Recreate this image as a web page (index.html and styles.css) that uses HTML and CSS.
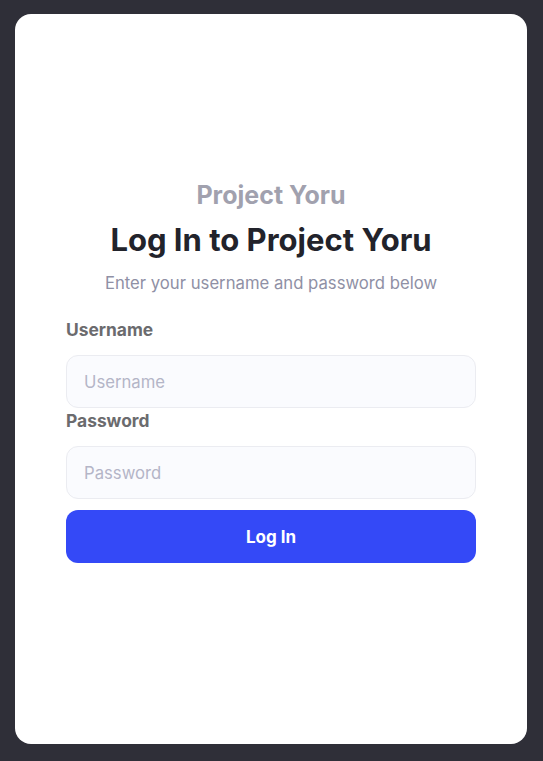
FILE: index.html
```html
<!DOCTYPE html>
<html lang="en">
<head>
<meta charset="utf-8">
<title>Log In - Project Yoru</title>
<link rel="stylesheet" href="styles.css">
</head>
<body>
<main class="card">
  <div class="content">
    <header class="head">
      <p class="brand">Project Yoru</p>
      <h1 class="title">Log In to Project Yoru</h1>
      <p class="subtitle">Enter your username and password below</p>
    </header>
    <form class="form">
      <label class="label" for="username">Username</label>
      <input class="input" id="username" type="text" placeholder="Username">
      <label class="label" for="password">Password</label>
      <input class="input" id="password" type="password" placeholder="Password">
      <button class="button" type="button">Log In</button>
    </form>
  </div>
</main>
</body>
</html>
```

FILE: styles.css
```css
* { box-sizing: border-box; }
html, body { height: 100%; }
body {
  margin: 0;
  background: #2f2f38;
  font-family: Inter, "Noto Sans", sans-serif;
  padding: 14px 16px 17px 15px;
  display: flex;
}
.card {
  flex: 1;
  background: #ffffff;
  border-radius: 16px;
  display: flex;
  flex-direction: column;
  justify-content: center;
  padding: 0 51px 15px;
}
.head {
  text-align: center;
}
.brand {
  margin: 0;
  font-size: 25px;
  font-weight: 700;
  line-height: 30px;
  color: #a1a1ae;
}
.title {
  margin: 11px 0 0;
  font-size: 31px;
  font-weight: 700;
  line-height: 38px;
  color: #22232b;
}
.subtitle {
  margin: 13px 0 0;
  font-size: 16.7px;
  font-weight: 400;
  line-height: 22px;
  color: #8f90a5;
}
.form {
  display: flex;
  flex-direction: column;
  margin-top: 25px;
}
.label {
  font-size: 17.4px;
  font-weight: 700;
  line-height: 22px;
  color: #6b6b6e;
  margin-bottom: 14px;
}
.input {
  height: 53px;
  border: 1px solid #ebecf1;
  border-radius: 12px;
  background: #fafbfe;
  padding: 0 17px;
  font-family: inherit;
  font-size: 16.7px;
  color: #22232b;
  margin-bottom: 2px;
  outline: none;
}
.input::placeholder { color: #b4b5c7; }
.button {
  margin-top: 9px;
  height: 53px;
  border: none;
  border-radius: 12px;
  background: #3449f7;
  color: #ffffff;
  font-family: inherit;
  font-size: 17px;
  font-weight: 700;
}
```
